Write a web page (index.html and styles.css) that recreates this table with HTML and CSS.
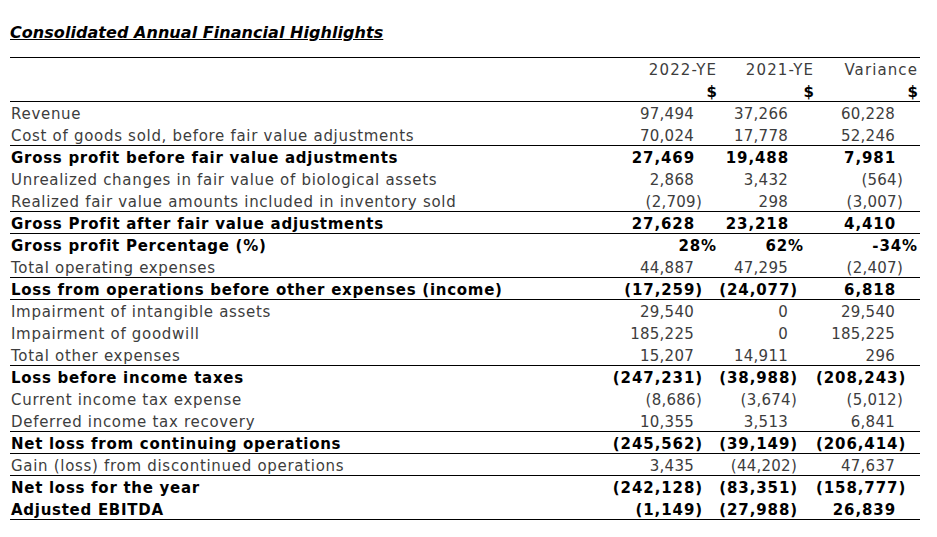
FILE: index.html
```html
<!DOCTYPE html>
<html>
<head>
<meta charset="utf-8">
<link rel="stylesheet" href="styles.css">
</head>
<body>
<h1 class="title">Consolidated Annual Financial Highlights</h1>
<table class="fin">
  <colgroup>
    <col class="c-label"><col class="c-num"><col class="c-num2"><col class="c-num3">
  </colgroup>
  <thead>
    <tr class="h1r"><th></th><th>2022-YE</th><th>2021-YE</th><th>Variance</th></tr>
    <tr class="h2r"><th></th><th class="cur">$</th><th class="cur">$</th><th class="cur">$</th></tr>
  </thead>
  <tbody>
    <tr><td>Revenue</td><td class="p">97,494</td><td class="p">37,266</td><td class="p">60,228</td></tr>
    <tr class="rule"><td>Cost of goods sold, before fair value adjustments</td><td class="p">70,024</td><td class="p">17,778</td><td class="p">52,246</td></tr>
    <tr class="b"><td>Gross profit before fair value adjustments</td><td class="p">27,469</td><td class="p">19,488</td><td class="p">7,981</td></tr>
    <tr><td>Unrealized changes in fair value of biological assets</td><td class="p">2,868</td><td class="p">3,432</td><td>(564)</td></tr>
    <tr class="rule"><td>Realized fair value amounts included in inventory sold</td><td>(2,709)</td><td class="p">298</td><td>(3,007)</td></tr>
    <tr class="b rule"><td>Gross Profit after fair value adjustments</td><td class="p">27,628</td><td class="p">23,218</td><td class="p">4,410</td></tr>
    <tr class="b pct"><td>Gross profit Percentage (%)</td><td>28%</td><td>62%</td><td>-34%</td></tr>
    <tr class="rule"><td>Total operating expenses</td><td class="p">44,887</td><td class="p">47,295</td><td>(2,407)</td></tr>
    <tr class="b rule"><td>Loss from operations before other expenses (income)</td><td>(17,259)</td><td>(24,077)</td><td class="p">6,818</td></tr>
    <tr><td>Impairment of intangible assets</td><td class="p">29,540</td><td class="p">0</td><td class="p">29,540</td></tr>
    <tr><td>Impairment of goodwill</td><td class="p">185,225</td><td class="p">0</td><td class="p">185,225</td></tr>
    <tr class="rule"><td>Total other expenses</td><td class="p">15,207</td><td class="p">14,911</td><td class="p">296</td></tr>
    <tr class="b"><td>Loss before income taxes</td><td>(247,231)</td><td>(38,988)</td><td>(208,243)</td></tr>
    <tr><td>Current income tax expense</td><td>(8,686)</td><td>(3,674)</td><td>(5,012)</td></tr>
    <tr class="rule"><td>Deferred income tax recovery</td><td class="p">10,355</td><td class="p">3,513</td><td class="p">6,841</td></tr>
    <tr class="b rule"><td>Net loss from continuing operations</td><td>(245,562)</td><td>(39,149)</td><td>(206,414)</td></tr>
    <tr class="rule"><td>Gain (loss) from discontinued operations</td><td class="p">3,435</td><td>(44,202)</td><td class="p">47,637</td></tr>
    <tr class="b"><td>Net loss for the year</td><td>(242,128)</td><td>(83,351)</td><td>(158,777)</td></tr>
    <tr class="b rule"><td>Adjusted EBITDA</td><td>(1,149)</td><td>(27,988)</td><td class="p">26,839</td></tr>
  </tbody>
</table>
</body>
</html>
```

FILE: styles.css
```css
html, body {
  margin: 0;
  padding: 0;
  background: #fff;
}
body {
  padding: 22px 10px 0 10px;
  font-family: "DejaVu Sans", Verdana, sans-serif;
  color: #3d3d3d;
}
.title {
  margin: 0 0 14px 0;
  font-size: 16px;
  font-weight: bold;
  font-style: italic;
  text-decoration: underline;
  letter-spacing: 0.05px;
  color: #000;
  line-height: 21px;
}
.fin {
  border-collapse: separate;
  border-spacing: 0;
  width: 910px;
  font-size: 15px;
  table-layout: fixed;
}
.c-label { width: 600px; }
.c-num { width: 109px; }
.c-num2 { width: 97px; }
.c-num3 { width: 104px; }
.fin th {
  text-align: right;
  padding: 2px 2px 0 0;
  white-space: nowrap;
  line-height: 18px;
}
.fin thead tr.h1r th {
  border-top: 1px solid #000;
  height: 20px;
  font-weight: normal;
  letter-spacing: 1.1px;
  vertical-align: middle;
}
.fin thead tr.h2r th {
  border-bottom: 1px solid #000;
  height: 19px;
  color: #000;
  font-weight: bold;
  vertical-align: middle;
}
.fin td {
  height: 20px;
  padding: 2px 17px 0 0;
  text-align: right;
  white-space: nowrap;
  line-height: 18px;
  letter-spacing: 0.25px;
  vertical-align: middle;
}
.fin tr.rule td {
  height: 19px;
  border-bottom: 1px solid #000;
}
.fin td:first-child {
  text-align: left;
  padding-left: 1px;
  padding-right: 0;
  letter-spacing: 0.7px;
}
.fin td:nth-child(3) { padding-right: 19px; }
.fin td.p { padding-right: 25px; }
.fin td.p:nth-child(3) { padding-right: 28px; }
.fin tr.b td {
  font-weight: bold;
  color: #000;
  letter-spacing: 0.9px;
}
.fin tr.b td:first-child { letter-spacing: 0.72px; }
.fin tr.b td:nth-child(2), .fin tr.b td:nth-child(4) { padding-right: 16px; }
.fin tr.b td:nth-child(3) { padding-right: 18px; }
.fin tr.b td.p:nth-child(2), .fin tr.b td.p:nth-child(4) { padding-right: 24px; }
.fin tr.b td.p:nth-child(3) { padding-right: 27px; }
.fin tr.b.pct td:nth-child(2), .fin tr.b.pct td:nth-child(4) { padding-right: 2px; }
.fin tr.b.pct td:nth-child(3) { padding-right: 12px; }
```
